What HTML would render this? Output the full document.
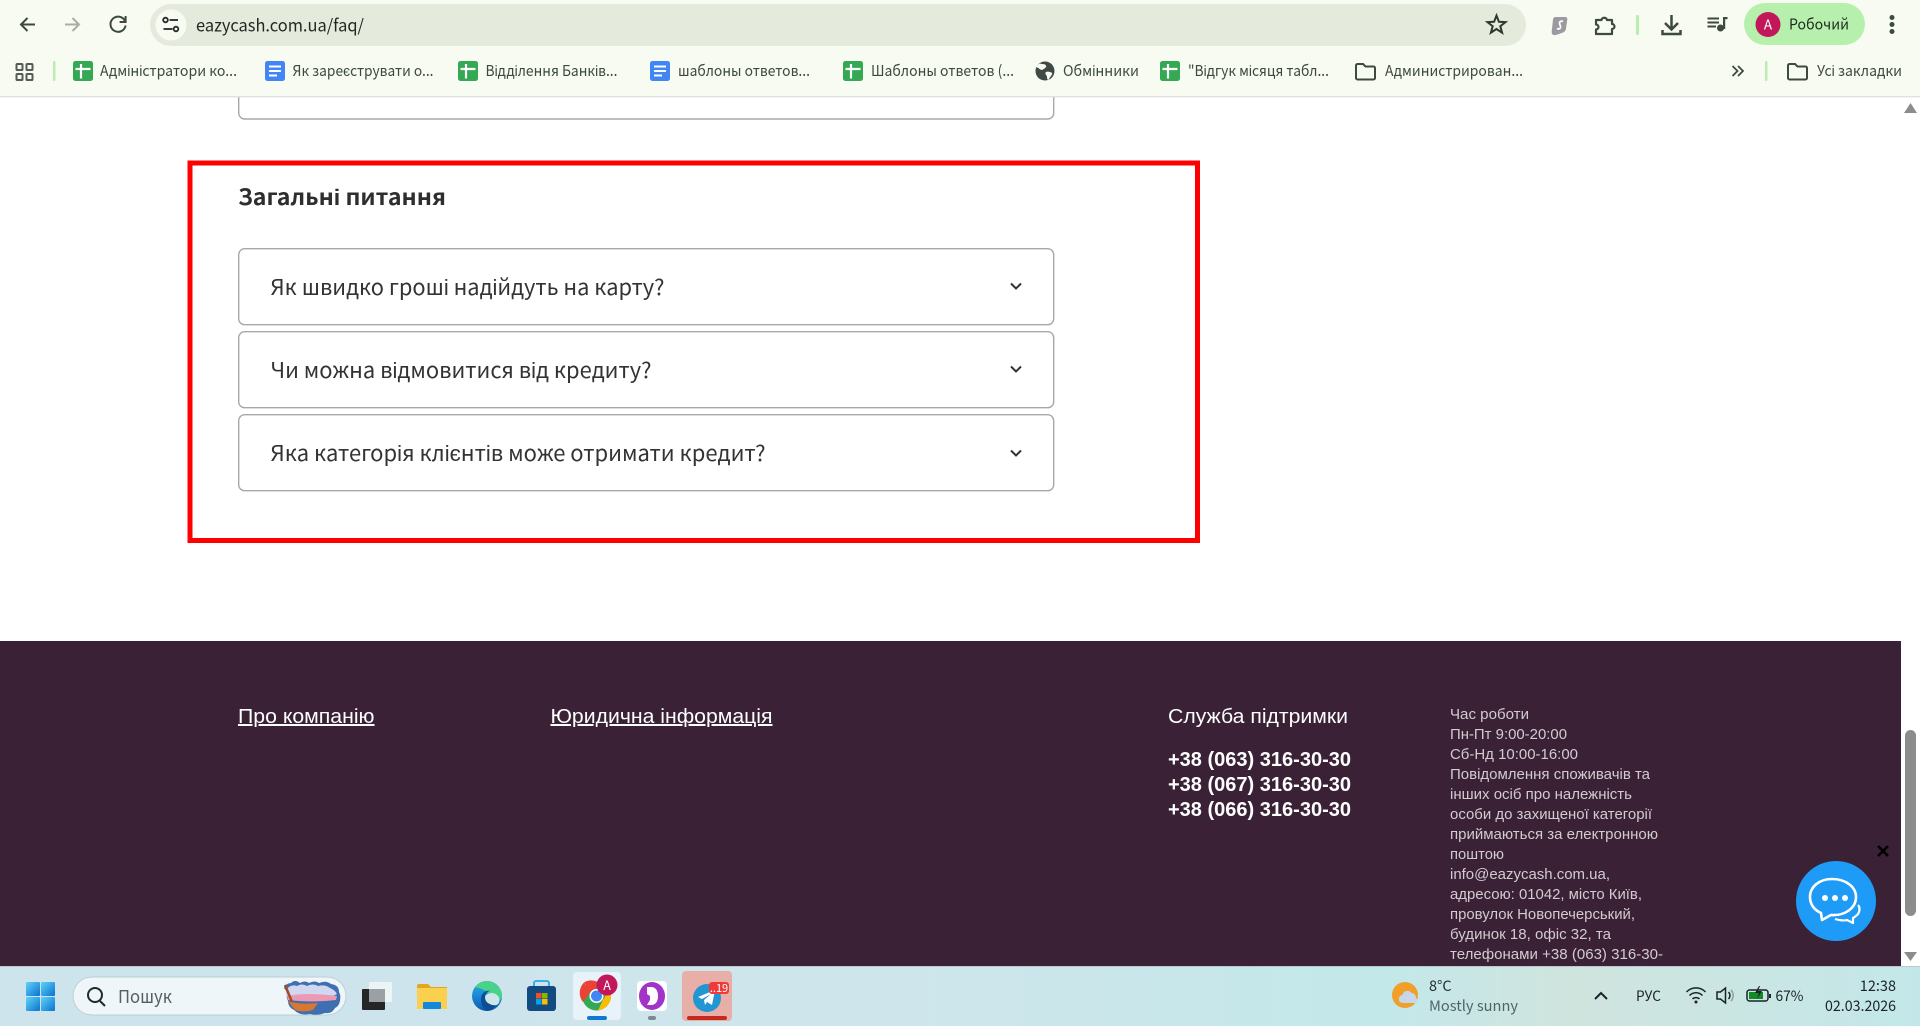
<!DOCTYPE html>
<html lang="uk">
<head>
<meta charset="utf-8">
<title>eazycash.com.ua/faq/</title>
<style>
html,body{margin:0;padding:0;width:1920px;height:1026px;overflow:hidden;background:#fff}
svg{position:absolute;left:0;top:0;display:block}
.ui{font-family:"Noto Sans CJK SC","Liberation Sans",sans-serif}
.ar{font-family:"Liberation Sans",Arial,sans-serif}
.bm{font-size:15px;fill:#3d493d}
.f{fill:#d2cbd0;font-size:15px}
</style>
</head>
<body>
<svg width="1920" height="1026" viewBox="0 0 1920 1026" xmlns="http://www.w3.org/2000/svg">
<defs>
<linearGradient id="tb" x1="0" x2="1" y1="0" y2="0">
<stop offset="0" stop-color="#cde4ec"/><stop offset=".45" stop-color="#cfe5ec"/><stop offset=".72" stop-color="#c3e8ea"/><stop offset=".82" stop-color="#d0e4de"/><stop offset="1" stop-color="#c3e7e9"/>
</linearGradient>
<linearGradient id="ed" x1="0" x2="0" y1="0" y2="1"><stop offset="0" stop-color="#2bb4d6"/><stop offset=".5" stop-color="#1b86d8"/><stop offset="1" stop-color="#0c5aa8"/></linearGradient>
<linearGradient id="st" x1="0" x2="1" y1="0" y2="1"><stop offset="0" stop-color="#5fd3f7"/><stop offset="1" stop-color="#0a72d0"/></linearGradient>
<g id="sh"><rect width="20" height="20" rx="2.5" fill="#34a853"/><path d="M2.5 8H17.5M8 3V17.5" stroke="#fff" stroke-width="2.2" fill="none"/></g>
<g id="dc"><rect width="20" height="20" rx="2.5" fill="#4285f4"/><path d="M4 5.5H16M4 10H16M4 14.5H12" stroke="#fff" stroke-width="2" fill="none"/></g>
<path id="fo" d="M1 3.5a1.5 1.5 0 0 1 1.5-1.5H8l2.5 2.5h8A1.5 1.5 0 0 1 20 6v10a1.5 1.5 0 0 1-1.5 1.5h-16A1.5 1.5 0 0 1 1 16Z" fill="none" stroke="#3f4a3f" stroke-width="2"/>
</defs>

<!-- page content -->
<rect x="238.7" y="40" width="815" height="79" rx="6" fill="#fff" stroke="#a8a8a8" stroke-width="1.4"/>
<rect x="190" y="163" width="1007.500" height="377.500" fill="none" stroke="#ff0000" stroke-width="5"/>
<text class="ui" x="238" y="205" font-size="22" font-weight="700" fill="#2e2e2e" textLength="208" lengthAdjust="spacingAndGlyphs">Загальні питання</text>
<g fill="#fff" stroke="#a8a8a8" stroke-width="1.4">
<rect x="238.7" y="248.7" width="815" height="76" rx="6"/>
<rect x="238.7" y="331.7" width="815" height="76" rx="6"/>
<rect x="238.7" y="414.7" width="815" height="76" rx="6"/>
</g>
<g class="ui" font-size="22" fill="#333">
<text x="270.500" y="295" textLength="394" lengthAdjust="spacingAndGlyphs">Як швидко гроші надійдуть на карту?</text>
<text x="270.500" y="378" textLength="381" lengthAdjust="spacingAndGlyphs">Чи можна відмовитися від кредиту?</text>
<text x="270.500" y="461" textLength="495" lengthAdjust="spacingAndGlyphs">Яка категорія клієнтів може отримати кредит?</text>
</g>
<g fill="none" stroke="#333" stroke-width="2">
<path d="M1011 283.500l5 5 5-5"/><path d="M1011 366.500l5 5 5-5"/><path d="M1011 450.500l5 5 5-5"/>
</g>

<!-- footer -->
<rect x="0" y="641" width="1901" height="326" fill="#3a2136"/>
<g class="ar" fill="#fff" font-size="20">
<text x="238" y="723" textLength="136.500" lengthAdjust="spacingAndGlyphs" style="text-decoration:underline">Про компанію</text>
<text x="550.500" y="723" textLength="222" lengthAdjust="spacingAndGlyphs" style="text-decoration:underline">Юридична інформація</text>
<text x="1168" y="723" textLength="180" lengthAdjust="spacingAndGlyphs">Служба підтримки</text>
<g font-weight="700">
<text x="1168" y="766" textLength="183" lengthAdjust="spacingAndGlyphs">+38 (063) 316-30-30</text>
<text x="1168" y="791" textLength="183" lengthAdjust="spacingAndGlyphs">+38 (067) 316-30-30</text>
<text x="1168" y="816" textLength="183" lengthAdjust="spacingAndGlyphs">+38 (066) 316-30-30</text>
</g>
</g>
<g class="ar f">
<text x="1450" y="719" textLength="79" lengthAdjust="spacingAndGlyphs">Час роботи</text>
<text x="1450" y="739" textLength="117" lengthAdjust="spacingAndGlyphs">Пн-Пт 9:00-20:00</text>
<text x="1450" y="759" textLength="128" lengthAdjust="spacingAndGlyphs">Сб-Нд 10:00-16:00</text>
<text x="1450" y="779" textLength="200" lengthAdjust="spacingAndGlyphs">Повідомлення споживачів та</text>
<text x="1450" y="799" textLength="182" lengthAdjust="spacingAndGlyphs">інших осіб про належність</text>
<text x="1450" y="819" textLength="202" lengthAdjust="spacingAndGlyphs">особи до захищеної категорії</text>
<text x="1450" y="839" textLength="208" lengthAdjust="spacingAndGlyphs">приймаються за електронною</text>
<text x="1450" y="859" textLength="54" lengthAdjust="spacingAndGlyphs">поштою</text>
<text x="1450" y="879" textLength="160" lengthAdjust="spacingAndGlyphs">info@eazycash.com.ua,</text>
<text x="1450" y="899" textLength="192" lengthAdjust="spacingAndGlyphs">адресою: 01042, місто Київ,</text>
<text x="1450" y="919" textLength="185" lengthAdjust="spacingAndGlyphs">провулок Новопечерський,</text>
<text x="1450" y="939" textLength="161" lengthAdjust="spacingAndGlyphs">будинок 18, офіс 32, та</text>
<text x="1450" y="959" textLength="213" lengthAdjust="spacingAndGlyphs">телефонами +38 (063) 316-30-</text>
</g>

<!-- chat widget -->
<circle cx="1836" cy="901" r="40" fill="#1e9bf6"/>
<g fill="none" stroke="#fff" stroke-width="2.6" stroke-linejoin="round">
<path d="M1832 879c-13 0-22 8-22 18 0 7 4 13 11 16l1 7 9-5c14 1 25-7 25-18 0-10-10-18-24-18Z"/>
<path d="M1858 905c2 2 2 6 0 9-2 2-3 3-5 4l0 5-6-3c-3 1-9 0-12-1" stroke-width="2.2"/>
</g>
<g fill="#fff"><circle cx="1825" cy="898" r="3"/><circle cx="1835" cy="898" r="3"/><circle cx="1845" cy="898" r="3"/></g>
<path d="M1878 846l10 10M1888 846l-10 10" stroke="#000" stroke-width="2.6"/>

<!-- scrollbar -->
<rect x="1901" y="96" width="19" height="871" fill="#fff"/>
<rect x="1905" y="730" width="11" height="186" rx="5.5" fill="#8c8c8c"/>
<path d="M1904 113L1910.5 103L1917 113Z" fill="#8c8c8c"/>
<path d="M1904 952H1917L1910.5 961Z" fill="#8c8c8c"/>

<!-- browser chrome -->
<rect x="0" y="0" width="1920" height="96" fill="#f7fbf2"/>
<rect x="0" y="96" width="1920" height="1.4" fill="#dfe3da"/>
<g fill="none" stroke="#3d4a3d" stroke-width="2">
<path d="M35 24.5H21.5M27.5 18L21 24.5L27.5 31"/>
<path d="M79 24.5H65M72.500 18L79 24.5L72.500 31" stroke="#a9afa6"/>
<path d="M125 21a7.6 7.6 0 1 0 .6 4.5"/><path d="M125.6 16v6h-6"/>
</g>
<rect x="150" y="4" width="1376" height="42" rx="21" fill="#e4ebdd"/>
<circle cx="171" cy="25" r="15.5" fill="#f7fbf2"/>
<g fill="none" stroke="#232a23" stroke-width="1.8">
<circle cx="165.5" cy="20" r="2.3"/><path d="M169.5 20H178"/>
<path d="M163.5 29H172.5"/><circle cx="176" cy="29" r="2.3"/>
</g>
<text class="ui" x="196" y="31.5" font-size="17" fill="#1f2720" textLength="168" lengthAdjust="spacingAndGlyphs">eazycash.com.ua/faq/</text>
<path d="M1496.5 15.5L1498.9 21.8L1505.5 22.1L1500.3 26.2L1502.1 32.7L1496.5 29L1490.9 32.7L1492.7 26.2L1487.5 22.1L1494.1 21.8Z" fill="none" stroke="#2f3a2f" stroke-width="2"/>
<path d="M1556 17h9q2.500 0 2.300 2.500l-1.300 9q-.5 3-3 4l-7 2.500q-2 .5-3.500-.5-1-1-.8-3l1.300-12q.3-2.500 3-2.500Z" fill="#9a9aa0"/>
<path d="M1563 21.500c-2-1-3.500 0-3.500 2 0 1.500 1.500 2 1 4-.3 1.500-2 2-3.500 1" fill="none" stroke="#fff" stroke-width="1.800"/>
<path d="M1597 20h5.500a2.800 2.800 0 0 1 5.500 0H1613v4a2.500 2.500 0 0 1 0 5V34H1597V29.500a2.500 2.500 0 0 0 0-5Z" fill="none" stroke="#3d4a3d" stroke-width="2.200" stroke-linejoin="round" transform="translate(-1 0)"/>
<rect x="1636" y="15" width="3" height="20" rx="1" fill="#b7efae"/>
<path d="M1671.5 15V29M1665 23l6.500 6.500L1678 23M1662.500 30v4h18v-4" fill="none" stroke="#3d4a3d" stroke-width="2.500"/>
<path d="M1707.500 18.500H1719M1707.500 22.500H1719M1707.500 26.500H1716" fill="none" stroke="#3d4a3d" stroke-width="2"/>
<circle cx="1720.500" cy="28" r="3.500" fill="#3d4a3d"/><rect x="1723" y="17" width="2.200" height="12" fill="#3d4a3d"/><rect x="1723" y="17" width="4.500" height="2.200" fill="#3d4a3d"/>
<rect x="1744" y="3" width="121" height="42" rx="21" fill="#b7f0ad"/>
<circle cx="1768" cy="24.500" r="12.500" fill="#c2185b"/>
<text class="ui" x="1768" y="29.500" font-size="13.500" fill="#fff" text-anchor="middle">А</text>
<text class="ui" x="1789" y="29.500" font-size="15" fill="#1f2a1f" textLength="60" lengthAdjust="spacingAndGlyphs">Робочий</text>
<g fill="#3d4a3d"><circle cx="1892" cy="17.500" r="2.500"/><circle cx="1892" cy="24.500" r="2.500"/><circle cx="1892" cy="31.500" r="2.500"/></g>

<g fill="none" stroke="#555b55" stroke-width="2">
<rect x="16.500" y="64" width="6" height="6" rx=".8"/><rect x="26.500" y="64" width="6" height="6" rx=".8"/><rect x="16.500" y="74" width="6" height="6" rx=".8"/><rect x="26.500" y="74" width="6" height="6" rx=".8"/>
</g>
<rect x="53" y="61" width="2.500" height="20" rx="1" fill="#b7efae"/>
<use href="#sh" x="73" y="61"/>
<use href="#dc" x="265" y="61"/>
<use href="#sh" x="458" y="61"/>
<use href="#dc" x="650" y="61"/>
<use href="#sh" x="843" y="61"/>
<use href="#sh" x="1160" y="61"/>
<circle cx="1045" cy="71" r="9.500" fill="#3f4a44"/>
<path d="M1040 63.500c2 1 5 0 6 2s-2 3-3 4-3 0-4-1-3-1-3-2 2-2 4-3ZM1046 72c2-1 5 0 6 1s-2 4-3 6-2 0-2-2-3-3-1-5Z" fill="#f7fbf2"/>
<use href="#fo" x="1355" y="62"/>
<use href="#fo" x="1787" y="62"/>
<g class="ui bm">
<text x="100" y="76" textLength="137" lengthAdjust="spacingAndGlyphs">Адміністратори ко...</text>
<text x="292.500" y="76" textLength="141" lengthAdjust="spacingAndGlyphs">Як зареєструвати о...</text>
<text x="485.500" y="76" textLength="132" lengthAdjust="spacingAndGlyphs">Відділення Банків...</text>
<text x="678" y="76" textLength="132" lengthAdjust="spacingAndGlyphs">шаблоны ответов...</text>
<text x="871" y="76" textLength="143" lengthAdjust="spacingAndGlyphs">Шаблоны ответов (...</text>
<text x="1063" y="76" textLength="76" lengthAdjust="spacingAndGlyphs">Обмінники</text>
<text x="1188" y="76" textLength="141" lengthAdjust="spacingAndGlyphs">"Відгук місяця табл...</text>
<text x="1385" y="76" textLength="138" lengthAdjust="spacingAndGlyphs">Администрирован...</text>
<text x="1817" y="76" textLength="85" lengthAdjust="spacingAndGlyphs">Усі закладки</text>
</g>
<path d="M1732.500 66l5 5-5 5M1738 66l5 5-5 5" fill="none" stroke="#3d4a3d" stroke-width="1.800"/>
<rect x="1765" y="61" width="2.500" height="20" rx="1" fill="#b7efae"/>

<!-- taskbar -->
<rect x="0" y="966" width="1920" height="60" fill="url(#tb)"/>
<rect x="0" y="966" width="1920" height="1" fill="#b9c9cf"/>
<g fill="url(#st)"><rect x="26" y="982" width="14" height="14" rx="1"/><rect x="41" y="982" width="14" height="14" rx="1"/><rect x="26" y="997" width="14" height="14" rx="1"/><rect x="41" y="997" width="14" height="14" rx="1"/></g>
<rect x="73" y="977" width="273" height="38" rx="19" fill="#eef6f9" stroke="#bccfd4"/>
<circle cx="95" cy="995" r="7" fill="none" stroke="#1f2a2e" stroke-width="2"/><path d="M100 1001l5 5" stroke="#1f2a2e" stroke-width="2"/>
<text class="ui" x="118" y="1003" font-size="18" fill="#555f63" textLength="54" lengthAdjust="spacingAndGlyphs">Пошук</text>
<!-- search highlight: boat on a lake -->
<path d="M284 988q2-5 7-5 4-4 9 0 5-3 9 0 6-3 10 0 7-3 12 1 8 1 8 8 2 3 1 9-1 5-5 7-3 6-10 5-8 3-15 1-10 2-16-4-6-3-6-9-2-4-1-9Z" fill="#3f6fb0"/>
<path d="M287 989q4-5 10-3 5-3 10 0 6-3 11 0 7-2 12 2 5 2 7 6-4 3-18 2-18 1-30 1-5-2-2-8Z" fill="#cfd8f0"/>
<path d="M287 996q20-4 50 0l-1 4q-24 3-48 0Z" fill="#ec9ab4"/>
<path d="M288 1001q10 4 30 2l-5 7q-10 3-18 0Z" fill="#d9762f"/>
<path d="M285 985l7 17" stroke="#a44a22" stroke-width="2.500"/>

<rect x="362" y="989" width="23" height="21" rx="1" fill="#262626"/><rect x="369" y="982" width="23" height="20" rx="1" fill="#f5f8f9" opacity=".8"/><rect x="369" y="989" width="16" height="13" fill="#9aa0a3"/>
<path d="M417 986a2 2 0 0 1 2-2h9l3 3h16v21h-30Z" fill="#e0a81e"/><rect x="417" y="988" width="30" height="21" fill="#fbd04f"/><rect x="423" y="1002" width="18" height="7" rx="1" fill="#1288d8"/>
<!-- edge -->
<circle cx="487" cy="996" r="15" fill="url(#ed)"/>
<path d="M475 987c3-4 7-6 12-6 8 0 15 7 15 14 0 3-1 5-4 6-5 1-6-4-8-6-4-5-10-7-15-8Z" fill="#48d28a"/>
<path d="M484 1000c0-5 4-7 8-7 3 0 6 2 7 5 2 4-1 8-7 8-5 0-8-3-8-6Z" fill="#cfe5ec"/>
<path d="M481 999c0-6 5-9 9-8-5 1-6 6-4 10 2 3 7 5 11 4-3 3-6 5-10 6-4-2-6-7-6-12Z" fill="#0b4e92"/>
<!-- store -->
<path d="M534 986v-3a2 2 0 0 1 2-2h11a2 2 0 0 1 2 2v3" fill="none" stroke="#28a8e8" stroke-width="1.800"/>
<rect x="527" y="986" width="29" height="25" rx="3" fill="#134a80"/>
<rect x="536" y="993" width="5.500" height="5.500" fill="#f25022"/><rect x="542" y="993" width="5.500" height="5.500" fill="#7fba00"/><rect x="536" y="999" width="5.500" height="5.500" fill="#00a4ef"/><rect x="542" y="999" width="5.500" height="5.500" fill="#ffb900"/>

<rect x="573" y="972" width="48" height="48" rx="4" fill="#e7f3f8"/>
<g transform="translate(1.500 0)">
<circle cx="595" cy="996" r="14.500" fill="#34a853"/>
<path d="M595 981.500a14.500 14.500 0 0 1 12.600 7.200H595a7.300 7.300 0 0 0-6.300 3.700l-6.200-10a14.500 14.500 0 0 1 12.500-.9Z" fill="#ea4335"/>
<path d="M582.500 982.500a14.500 14.500 0 0 0-1 19.500l7.200-9.600Z" fill="#ea4335"/>
<path d="M607.600 988.700a14.500 14.500 0 0 1-11 21.700l5-10.900a7.300 7.300 0 0 0 0-10.800Z" fill="#fbbc05"/>
<circle cx="595" cy="996" r="7" fill="#fff"/><circle cx="595" cy="996" r="5.500" fill="#4285f4"/>
</g>
<circle cx="607" cy="985" r="10.500" fill="#c2185b"/>
<text class="ui" x="607" y="990" font-size="12.500" fill="#fff" text-anchor="middle">А</text>
<rect x="587" y="1016" width="20" height="4" rx="2" fill="#0f78d4"/>

<rect x="637" y="981" width="30" height="30" rx="4" fill="#fff"/>
<ellipse cx="652" cy="996" rx="13" ry="14" fill="#a333c8"/>
<path d="M647 987h4c5 0 7 4 7 9s-2 9-7 9h-4l3-5v-4l-3-2Z" fill="#fff"/>
<rect x="648" y="1016" width="8" height="4" rx="2" fill="#7c8a90"/>

<rect x="682" y="971" width="50" height="50" rx="4" fill="#e8aea8"/>
<circle cx="707" cy="998" r="14" fill="#2196d2"/>
<path d="M698 997l17-7-3 15-5-3-2 3-1-5 7-6-9 5Z" fill="#fff"/>
<rect x="709" y="982" width="20" height="12" rx="3" fill="#f03a3a"/>
<text class="ui" x="719" y="992" font-size="11" fill="#fff" text-anchor="middle">..19</text>
<rect x="687" y="1016" width="40" height="4" rx="2" fill="#c42b1c"/>

<circle cx="1405" cy="995" r="13" fill="#f0a028"/>
<path d="M1403 1003a4 4 0 0 1-.5-8 5 5 0 0 1 9-2 4.500 4.500 0 0 1 4.500 5 3 3 0 0 1-.5 5Z" fill="#c6d6ec"/>
<text class="ui" x="1429" y="991" font-size="14.500" fill="#1e2a2e">8°C</text>
<text class="ui" x="1429" y="1011" font-size="14.500" fill="#4f6468" textLength="89" lengthAdjust="spacingAndGlyphs">Mostly sunny</text>
<path d="M1595 999l6-6 6 6" fill="none" stroke="#1a2326" stroke-width="2"/>
<text class="ui" x="1636" y="1001" font-size="14" fill="#1a2326" textLength="25" lengthAdjust="spacingAndGlyphs">РУС</text>
<g fill="none" stroke="#1a2326" stroke-width="1.500">
<path d="M1686.500 992a13 13 0 0 1 19 0M1689.500 995.500a9 9 0 0 1 13 0M1692.500 999a5 5 0 0 1 7 0"/>
<path d="M1717 992h3.500l5-4v15l-5-4H1717ZM1728.500 992a5 5 0 0 1 0 7"/>
<path d="M1731 990a8 8 0 0 1 0 11" stroke="#8aa0a4"/>
<rect x="1747" y="990" width="21" height="11" rx="2.500"/><path d="M1770 994v4" stroke-width="2"/>
</g>
<circle cx="1696" cy="1002" r="1.500" fill="#1a2326"/>
<rect x="1749" y="992" width="14" height="7" fill="#128a26"/>
<path d="M1759 986l-4 7h4l-2 6 5-8h-4l2-5Z" fill="#1a2326"/>
<text class="ui" x="1775.500" y="1001" font-size="14.500" fill="#1a2326" textLength="28" lengthAdjust="spacingAndGlyphs">67%</text>
<text class="ui" x="1896" y="991" font-size="14.500" fill="#1a2326" text-anchor="end">12:38</text>
<text class="ui" x="1825" y="1011" font-size="14.500" fill="#1a2326" textLength="71" lengthAdjust="spacingAndGlyphs">02.03.2026</text>
</svg>
</body>
</html>
